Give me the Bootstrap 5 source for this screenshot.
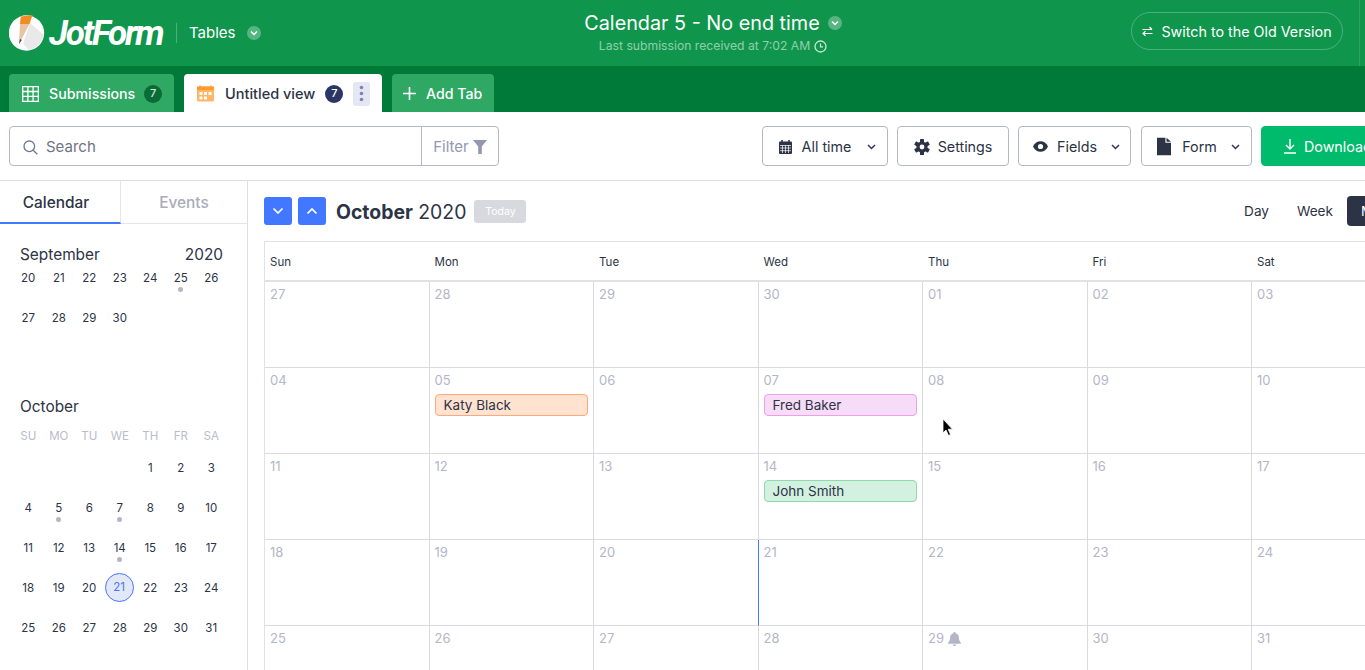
<!DOCTYPE html>
<html lang="en">
<head>
  <meta charset="UTF-8" />
  <title>Calendar 5 - No end time</title>
  <link href="https://cdn.jsdelivr.net/npm/bootstrap@5.3.0/dist/css/bootstrap.min.css" rel="stylesheet">
  <style>
    html, body { height: 670px; overflow: hidden; }
    body { font-family: Inter, "Noto Sans", sans-serif; color: #2c3345; background: #fff; width: 1365px; position: relative; }
    .top-head { height: 66px; background: #0f964c; color: #fff; }
    .logo-word { font-family: Roboto, sans-serif; font-weight: 700; font-style: italic; font-size: 35px; letter-spacing: -2.2px; line-height: 1; margin-left: 4px; width: 115px; white-space: nowrap; }
    .head-left { width: 568px; padding-left: 9px; }
    .head-sep { width: 1px; height: 20px; background: rgba(255,255,255,.25); margin: 0 12px; }
    .head-app { font-size: 15px; margin-right: 11px; }
    .chev-dot { width: 14px; height: 14px; border-radius: 50%; background: rgba(255,255,255,.3); }
    .head-mid { width: 290px; text-align: center; padding-top: 11px; }
    .head-title { font-size: 19.8px; line-height: 24px; white-space: nowrap; }
    .head-sub { font-size: 12.2px; line-height: 16px; color: rgba(255,255,255,.55); margin-top: 3px; white-space: nowrap; }
    .old-btn { width: 212px; height: 38px; margin-left: 273px; margin-top: 12px; border: 1px solid rgba(255,255,255,.25); border-radius: 19px; color: #fff; font-size: 14.3px; padding: 1px 0 0; }
    .head-line { width: 1px; height: 66px; background: rgba(255,255,255,.12); margin-left: 16px; }
    .tab-strip { height: 46px; background: #007a38; padding: 8px 0 0 9px; gap: 10px; }
    .tab-item { height: 38px; padding-top: 1px; border-radius: 4px 4px 0 0; background: #2ea863; color: #fff; font-size: 14.2px; font-weight: 500; }
    .tab-on { background: #fff; color: #2c3345; font-size: 14.5px; }
    .tab-count { width: 18px; height: 18px; border-radius: 50%; background: #0b6b36; font-size: 11px; color: #cfe8d8; }
    .tab-on .tab-count { background: #2c3665; color: #fff; }
    .tab-more { width: 17px; height: 24px; background: #e3e6f5; border-radius: 3px; }
    .tool-row { height: 69px; padding: 14px 0 0 9px; border-bottom: 1px solid #dcdee6; }
    .search-box { width: 490px; height: 40px; border: 1px solid #b4b7cc; border-radius: 4px; }
    .search-word { color: #6f7385; font-size: 15px; padding-left: 13px; padding-top: 2px; }
    .filter-part { width: 77px; border-left: 1px solid #b4b7cc; color: #9397b0; font-size: 15px; padding-top: 2px; }
    .tool-btns { margin-left: 263px; gap: 9px; }
    .tool-btn { height: 40px; border: 1px solid #b4b7cc; border-radius: 4px; font-size: 14.3px; color: #2c3345; background: #fff; padding: 1px 0 0; white-space: nowrap; flex: none; }
    .tool-btn-time { width: 126px; padding-left: 5px; }
    .tool-btn-set { width: 112px; }
    .tool-btn-fields { width: 113px; padding-left: 4px; }
    .tool-btn-form { width: 111px; padding-left: 4px; margin-left: 1px; }
    .dl-btn { width: 160px; background: #00bb6c; border-color: #00bb6c; color: #fff; justify-content: flex-start; padding-left: 22px; }
    .side-col { width: 248px; height: 489px; border-right: 1px solid #dcdee6; flex: none; }
    .side-tabs { height: 43px; border-bottom: 1px solid #e3e5ea; }
    .side-tab { font-size: 15.4px; font-weight: 500; color: #a9acba; padding-top: 2px; }
    .side-tab-on { width: 121px; color: #2c3345; border-bottom: 2px solid #4277ff; border-right: 1px solid #e3e5ea; height: 43px; padding-right: 8px; }
    .mini-name { padding: 21px 24px 0 20px; font-size: 15.4px; line-height: 20px; }
    .mini-name-next { padding-top: 49px; }
    .mini-grid { display: grid; grid-template-columns: repeat(7, 30.5px); margin-left: 13px; font-size: 11.5px; line-height: 20px; text-align: center; }
    .mini-sep { margin-top: 3px; }
    .mini-day { height: 40px; position: relative; }
    .mini-dot::after { content: ""; position: absolute; left: 50%; top: 19px; width: 5px; height: 5px; margin-left: -2.5px; border-radius: 50%; background: #b4b6c6; }
    .mini-now { position: absolute; left: 0; top: -5px; width: 29px; height: 29px; line-height: 27px; border-radius: 50%; border: 1px solid #4277ff; background: #e3e8f8; color: #4277ff; }
    .mini-head { color: #b9bccb; margin-top: 9px; margin-bottom: 12px; }
    .main-col { padding: 16px 0 0 16px; flex: none; width: 1117px; }
    .month-bar { height: 28px; }
    .arrow-btn { width: 28px; height: 28px; background: #4277ff; border-radius: 3px; }
    .arrow-next { margin-left: 6px; }
    .month-name { font-size: 19.4px; line-height: 30px; margin-left: 10px; white-space: nowrap; }
    .today-btn { width: 52px; height: 23px; background: #d7d9df; color: #fff; font-size: 10.5px; border-radius: 3px; margin-left: 8px; margin-top: 3px; }
    .view-pick { margin-left: auto; font-size: 13.6px; margin-right: -41px; }
    .view-pick span { margin-right: 28px; }
    .view-pick .view-on { margin: 0 -1px 0 -14px; width: 60px; height: 30px; background: #2c3345; color: #fff; border-radius: 4px 0 0 4px; line-height: 30px; padding-left: 14px; }
    .cal-grid { display: grid; grid-template-columns: repeat(7, 164.5px); margin-top: 16px; border-top: 1px solid #dfe1ea; border-left: 1px solid #dfe1ea; width: 1152px; }
    .cal-top { height: 40px; border-bottom: 2px solid #dfe1e6; font-size: 11.5px; line-height: 40px; padding-left: 5px; }
    .cal-cell { height: 86px; border-right: 1px solid #d9dae0; border-bottom: 1px solid #d9dae0; padding: 2px 5px 0 5px; }
    .cal-last { height: 44px; border-bottom: 0; }
    .cal-num { font-size: 13px; line-height: 20px; color: #b4b6c8; }
    .now-line { border-right-color: #4277ff; }
    .pill { height: 22px; width: 153px; margin-top: 4px; border: 1px solid; border-radius: 4px; font-size: 13.5px; line-height: 20px; padding-left: 8px; }
    .pill-orange { background: #ffe2cf; border-color: #ffa87c; }
    .pill-pink { background: #f6dcf6; border-color: #eca0ea; }
    .pill-green { background: #d3f1e0; border-color: #8fdaac; }
    .mouse-arrow { position: absolute; left: 942px; top: 418px; }
    .lbl-gap { margin: 0 16px 0 10px; }
    .lbl-gap-fields { margin: 0 14px 0 9px; }
    .lbl-gap-form { margin: 0 14px 0 11px; }
  </style>
</head>
<body>

<div class="top-head d-flex">
  <div class="head-left d-flex align-items-center">
    <svg class="flex-shrink-0" width="36" height="38" viewBox="9 12 36 38">
      <circle cx="26.5" cy="31" r="17.7" fill="#fff"/>
      <path d="M30 21 L44 33 C42 41 36 46 29 48 L23 42 Z" fill="#e9e9e9"/>
      <path d="M20 22 L29.5 22 L19 42 Z" fill="#e7c5a3"/>
      <path d="M20.8 14.5 L32.5 13 L29.5 22 L20 22 Z" fill="#f28c22"/>
      <path d="M20 37 L21.8 38 L19 42 Z" fill="#444"/>
    </svg>
    <div class="logo-word">JotForm</div>
    <div class="head-sep"></div>
    <span class="head-app">Tables</span>
    <span class="chev-dot d-flex align-items-center justify-content-center">
      <svg width="8" height="6" viewBox="0 0 8 6"><path d="M1 1.5 L4 4.5 L7 1.5" fill="none" stroke="#fff" stroke-width="1.4"/></svg>
    </span>
  </div>
  <div class="head-mid">
    <div class="head-title d-flex justify-content-center align-items-center gap-2">Calendar 5 - No end time
      <span class="chev-dot d-flex align-items-center justify-content-center">
        <svg width="8" height="6" viewBox="0 0 8 6"><path d="M1 1.5 L4 4.5 L7 1.5" fill="none" stroke="#fff" stroke-width="1.4"/></svg>
      </span>
    </div>
    <div class="head-sub d-flex justify-content-center align-items-center gap-1">Last submission received at 7:02 AM
      <svg width="13" height="13" viewBox="0 0 13 13"><circle cx="6.5" cy="6.5" r="5.5" fill="none" stroke="#cde6d7" stroke-width="1.3"/><path d="M6.5 3.5 V6.8 H9" fill="none" stroke="#cde6d7" stroke-width="1.2"/></svg>
    </div>
  </div>
  <button class="btn old-btn d-flex align-items-center justify-content-center gap-2 flex-shrink-0">
    <svg width="11" height="11" viewBox="0 0 11 11"><path d="M0.5 3.5 H10 M7.5 1 L10 3.5 M10.5 7.5 H1 M3.5 5.2 L1 7.5 L3.5 9.8" fill="none" stroke="#fff" stroke-width="1.2"/></svg>
    Switch to the Old Version
  </button>
  <div class="head-line"></div>
</div>

<div class="tab-strip d-flex">
  <div class="tab-item d-flex align-items-center" style="width:165px;padding-left:13px">
    <svg width="17" height="16" viewBox="0 0 17 16"><path d="M.7.7 H16.3 V15.3 H.7 Z M.7 5.5 H16.3 M.7 10.4 H16.3 M5.9.7 V15.3 M11.1.7 V15.3" fill="none" stroke="#fff" stroke-width="1.3"/></svg>
    <span style="margin-left:10px">Submissions</span>
    <span class="tab-count d-flex align-items-center justify-content-center" style="margin-left:9px">7</span>
  </div>
  <div class="tab-item tab-on d-flex align-items-center" style="width:198px;padding-left:13px">
    <svg width="17" height="17" viewBox="0 0 17 17"><rect y="1.5" width="17" height="15" rx="1.5" fill="#ffb766"/><rect y="1.5" width="17" height="3.5" fill="#ff9a2e"/><path d="M3 .5V3M14 .5V3" stroke="#ff9a2e" stroke-width="1.3"/><g fill="#fff"><rect x="2.5" y="7" width="3" height="3"/><rect x="7" y="7" width="3" height="3"/><rect x="11.5" y="7" width="3" height="3"/><rect x="2.5" y="11.5" width="3" height="3"/><rect x="7" y="11.5" width="3" height="3"/></g></svg>
    <span style="margin-left:11px">Untitled view</span>
    <span class="tab-count d-flex align-items-center justify-content-center" style="margin-left:10px">7</span>
    <span class="tab-more d-flex align-items-center justify-content-center" style="margin-left:10px">
      <svg width="5" height="17" viewBox="0 0 5 17"><circle cx="2.5" cy="2.5" r="1.8" fill="#7f84a8"/><circle cx="2.5" cy="8.5" r="1.8" fill="#7f84a8"/><circle cx="2.5" cy="14.5" r="1.8" fill="#7f84a8"/></svg>
    </span>
  </div>
  <div class="tab-item d-flex align-items-center" style="width:102px;padding-left:11px">
    <svg width="13" height="13" viewBox="0 0 13 13"><path d="M6.5 0 V13 M0 6.5 H13" stroke="#fff" stroke-width="1.6"/></svg>
    <span style="margin-left:10px">Add Tab</span>
  </div>
</div>

<div class="tool-row d-flex">
  <div class="search-box d-flex flex-shrink-0">
    <div class="search-word flex-grow-1 d-flex align-items-center gap-2">
      <svg width="15" height="15" viewBox="0 0 15 15"><circle cx="6.3" cy="6.3" r="5.3" fill="none" stroke="#6d7a96" stroke-width="1.3"/><path d="M10.2 10.2 L14.3 14.3" stroke="#6d7a96" stroke-width="1.3"/></svg>
      Search
    </div>
    <div class="filter-part d-flex align-items-center justify-content-center gap-1">Filter
      <svg width="14" height="14" viewBox="0 0 14 14"><path d="M0 0 H14 L8.8 6.5 V14 H5.2 V6.5 Z" fill="#9397b0"/></svg>
    </div>
  </div>
  <div class="tool-btns d-flex">
    <button class="btn tool-btn tool-btn-time d-flex align-items-center justify-content-center">
      <svg width="13" height="14" viewBox="0 0 13 14"><rect y="1.5" width="13" height="12.5" rx="1" fill="#2c3345"/><path d="M3 0V3M10 0V3" stroke="#2c3345" stroke-width="1.5"/><path d="M1 5.5H12M1 8H12M1 10.7H12M3.5 5V13M6.5 5V13M9.5 5V13" stroke="#fff" stroke-width=".7"/></svg>
      <span class="lbl-gap">All time</span>
      <svg width="9" height="6" viewBox="0 0 9 6"><path d="M1 1 L4.5 4.5 L8 1" fill="none" stroke="#2c3665" stroke-width="1.5"/></svg>
    </button>
    <button class="btn tool-btn tool-btn-set d-flex align-items-center justify-content-center gap-2">
      <svg width="16" height="16" viewBox="0 0 16 16"><g fill="#2c3345"><rect x="6" y="0" width="4" height="16" rx=".6"/><rect x="6" y="0" width="4" height="16" rx=".6" transform="rotate(60 8 8)"/><rect x="6" y="0" width="4" height="16" rx=".6" transform="rotate(120 8 8)"/><circle cx="8" cy="8" r="5.6"/></g><circle cx="8" cy="8" r="2.4" fill="#fff"/></svg>
      <span>Settings</span>
    </button>
    <button class="btn tool-btn tool-btn-fields d-flex align-items-center justify-content-center">
      <svg width="15" height="11" viewBox="0 0 15 11"><path d="M0 5.5 C3 -1.5 12 -1.5 15 5.5 C12 12.5 3 12.5 0 5.5 Z" fill="#2c3345"/><circle cx="7.5" cy="5.5" r="2.6" fill="#fff"/></svg>
      <span class="lbl-gap-fields">Fields</span>
      <svg width="9" height="6" viewBox="0 0 9 6"><path d="M1 1 L4.5 4.5 L8 1" fill="none" stroke="#2c3665" stroke-width="1.5"/></svg>
    </button>
    <button class="btn tool-btn tool-btn-form d-flex align-items-center justify-content-center">
      <svg width="14" height="19" viewBox="0 0 15 19"><path d="M0 0 H9 V5.5 H15 V19 H0 Z M10.2 0 L15 4.5 H10.2 Z" fill="#2c3345"/></svg>
      <span class="lbl-gap-form">Form</span>
      <svg width="9" height="6" viewBox="0 0 9 6"><path d="M1 1 L4.5 4.5 L8 1" fill="none" stroke="#2c3665" stroke-width="1.5"/></svg>
    </button>
    <button class="btn tool-btn dl-btn d-flex align-items-center gap-2">
      <svg width="12" height="15" viewBox="0 0 12 15"><path d="M6 0 V9.5 M2 6 L6 10 L10 6 M0 14 H12" fill="none" stroke="#fff" stroke-width="1.4"/></svg>
      Download
    </button>
  </div>
</div>

<div class="d-flex">
  <div class="side-col">
    <div class="side-tabs d-flex">
      <div class="side-tab side-tab-on d-flex align-items-center justify-content-center">Calendar</div>
      <div class="side-tab flex-grow-1 d-flex align-items-center justify-content-center">Events</div>
    </div>
    <div class="mini-name d-flex justify-content-between"><span>September</span><span>2020</span></div>
    <div class="mini-grid mini-sep" id="sepDays"></div>
    <div class="mini-name mini-name-next">October</div>
    <div class="mini-grid mini-head"><span>SU</span><span>MO</span><span>TU</span><span>WE</span><span>TH</span><span>FR</span><span>SA</span></div>
    <div class="mini-grid" id="octDays"></div>
  </div>

  <div class="main-col">
    <div class="d-flex month-bar">
      <div class="arrow-btn d-flex align-items-center justify-content-center">
        <svg width="12" height="8" viewBox="0 0 12 8"><path d="M1.5 1.5 L6 6 L10.5 1.5" fill="none" stroke="#fff" stroke-width="1.7"/></svg>
      </div>
      <div class="arrow-btn arrow-next d-flex align-items-center justify-content-center">
        <svg width="12" height="8" viewBox="0 0 12 8"><path d="M1.5 6.5 L6 2 L10.5 6.5" fill="none" stroke="#fff" stroke-width="1.7"/></svg>
      </div>
      <div class="month-name"><b>October</b> 2020</div>
      <div class="today-btn d-flex align-items-center justify-content-center">Today</div>
      <div class="view-pick d-flex align-items-center"><span>Day</span><span>Week</span><span class="view-on">Month</span></div>
    </div>
    <div class="cal-grid" id="calGrid"></div>
  </div>
</div>

<svg class="mouse-arrow" width="12" height="19" viewBox="0 0 12 19"><path d="M1 1 V15 L4 12 L6.5 17.5 L8.5 16.5 L6.2 11.2 H10.5 Z" fill="#000" stroke="#fff" stroke-width=".8"/></svg>

<script>
  // mini calendars
  function fillMini(id, blanks, days, dots, now) {
    let html = "";
    for (let i = 0; i < blanks; i++) html += '<div class="mini-day"></div>';
    days.forEach(function (d) {
      const cls = dots.indexOf(d) >= 0 ? " mini-dot" : "";
      const inner = d === now ? '<span class="mini-now">' + d + '</span>' : d;
      html += '<div class="mini-day' + cls + '">' + inner + '</div>';
    });
    document.getElementById(id).innerHTML = html;
  }
  const range = (a, b) => Array.from({ length: b - a + 1 }, (_, i) => a + i);
  fillMini("sepDays", 0, range(20, 30), [25], 0);
  fillMini("octDays", 4, range(1, 31), [5, 7, 14], 21);

  // big calendar
  const heads = ["Sun", "Mon", "Tue", "Wed", "Thu", "Fri", "Sat"];
  const nums = ["27", "28", "29", "30", "01", "02", "03", "04", "05", "06", "07", "08", "09", "10"]
    .concat(range(11, 31).map(String));
  const events = {
    "05": ["Katy Black", "pill-orange"],
    "07": ["Fred Baker", "pill-pink"],
    "14": ["John Smith", "pill-green"]
  };
  const bellIcon = ' <svg width="13" height="14" viewBox="0 0 11 12"><path d="M5.5 0 C6.2 0 6.5 .5 6.5 1 C8.5 1.5 9.3 3 9.3 5 C9.3 7.5 10 8.2 11 9.2 V10 H0 V9.2 C1 8.2 1.7 7.5 1.7 5 C1.7 3 2.5 1.5 4.5 1 C4.5 .5 4.8 0 5.5 0 Z M4 10.7 H7 C7 11.5 6.3 12 5.5 12 C4.7 12 4 11.5 4 10.7 Z" fill="#b4b6c8"/></svg>';
  let cal = heads.map(h => '<div class="cal-top">' + h + '</div>').join("");
  nums.forEach(function (n, i) {
    const line = n === "20" ? " now-line" : "";
    const last = i >= 28 ? " cal-last" : "";
    const bell = n === "29" && i > 4 ? bellIcon : "";
    const ev = events[n] ? '<div class="pill ' + events[n][1] + '">' + events[n][0] + '</div>' : "";
    cal += '<div class="cal-cell' + line + last + '"><div class="cal-num">' + n + bell + '</div>' + ev + '</div>';
  });
  document.getElementById("calGrid").innerHTML = cal;
</script>
<script src="https://cdn.jsdelivr.net/npm/bootstrap@5.3.0/dist/js/bootstrap.bundle.min.js"></script>
</body>
</html>
